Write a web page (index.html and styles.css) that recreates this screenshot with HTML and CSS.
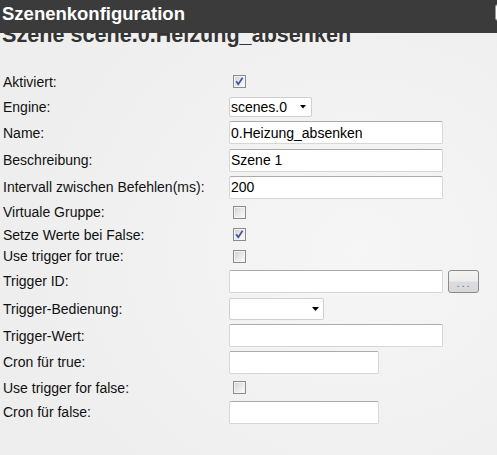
FILE: index.html
```html
<!DOCTYPE html>
<html lang="de">
<head>
<meta charset="utf-8">
<title>Szenenkonfiguration</title>
<link rel="stylesheet" href="styles.css">
</head>
<body>
<header class="topbar">
  <span class="topbar-title">Szenenkonfiguration</span>
  <span class="edge-btn"></span>
</header>
<main class="content">
  <h2 class="scene-title">Szene scene.0.Heizung_absenken</h2>
  <div class="form">
    <div class="row h25"><span class="lbl">Aktiviert:</span><span class="cb"><svg class="chk" width="11" height="11" viewBox="0 0 11 11"><path d="M2.2 5.2 L4.3 8.3 L8.6 1.8" fill="none" stroke="#3f51a0" stroke-width="1.6"/></svg></span></div>
    <div class="row h25"><span class="lbl">Engine:</span><div class="sel sel-engine"><span class="sel-text">scenes.0</span><svg class="arrow" width="6" height="4" viewBox="0 0 6 4"><polygon points="0,0 6,0 3,3.5" fill="#000"/></svg></div></div>
    <div class="row h27"><span class="lbl">Name:</span><input class="txt wide" type="text" value="0.Heizung_absenken"></div>
    <div class="row h28"><span class="lbl">Beschreibung:</span><input class="txt wide" type="text" value="Szene 1"></div>
    <div class="row h26"><span class="lbl">Intervall zwischen Befehlen(ms):</span><input class="txt wide" type="text" value="200"></div>
    <div class="row h24"><span class="lbl">Virtuale Gruppe:</span><span class="cb"></span></div>
    <div class="row h21"><span class="lbl">Setze Werte bei False:</span><span class="cb"><svg class="chk" width="11" height="11" viewBox="0 0 11 11"><path d="M2.2 5.2 L4.3 8.3 L8.6 1.8" fill="none" stroke="#3f51a0" stroke-width="1.6"/></svg></span></div>
    <div class="row h22"><span class="lbl">Use trigger for true:</span><span class="cb"></span></div>
    <div class="row h28"><span class="lbl">Trigger ID:</span><div class="ctl-group"><input class="txt wide" type="text" value=""><button class="dots-btn" type="button">...</button></div></div>
    <div class="row h27"><span class="lbl">Trigger-Bedienung:</span><div class="sel sel-trigger"><span class="sel-text"></span><svg class="arrow" width="7" height="4" viewBox="0 0 7 4"><polygon points="0,0 7,0 3.5,4" fill="#000"/></svg></div></div>
    <div class="row h27"><span class="lbl">Trigger-Wert:</span><input class="txt wide" type="text" value=""></div>
    <div class="row h26"><span class="lbl">Cron für true:</span><input class="txt short" type="text" value=""></div>
    <div class="row h25"><span class="lbl">Use trigger for false:</span><span class="cb"></span></div>
    <div class="row h24"><span class="lbl">Cron für false:</span><input class="txt short" type="text" value=""></div>
  </div>
</main>
</body>
</html>
```
FILE: styles.css
```css
html, body {
  margin: 0;
  height: 100%;
  overflow: hidden;
}
body {
  font-family: "Liberation Sans", Arial, sans-serif;
  color: #000;
  background: radial-gradient(ellipse 70% 70% at 72% 55%, #f6f6f6 0%, #f2f2f2 45%, #eeeeee 100%);
}
.topbar {
  height: 33px;
  background: #3b3b3b;
  display: flex;
  align-items: flex-start;
}
.topbar-title {
  color: #fff;
  font-weight: bold;
  font-size: 18.5px;
  line-height: 23px;
  margin-top: 2px;
  padding-left: 2px;
}
.edge-btn {
  margin-left: auto;
  margin-top: 4px;
  margin-right: -20px;
  width: 20px;
  height: 15px;
  flex-shrink: 0;
  background: #fff;
  border: 1px solid #9a9a9a;
  border-radius: 3px;
}
.content {
  overflow: hidden;
}
.scene-title {
  margin: -11px 0 0 0;
  padding-left: 2px;
  font-size: 21.6px;
  line-height: 25px;
  font-weight: bold;
  color: #333;
  white-space: nowrap;
}
.form {
  padding: 22px 0 0 3px;
}
.row {
  display: grid;
  grid-template-columns: 226px auto;
  align-items: center;
}
.h21 { height: 21px; }
.h22 { height: 22px; }
.h24 { height: 24px; }
.h25 { height: 25px; }
.h26 { height: 26px; }
.h27 { height: 27px; }
.h28 { height: 28px; }
.lbl {
  font-size: 14px;
  white-space: nowrap;
  color: #111;
}
.cb {
  display: block;
  width: 11px;
  height: 11px;
  margin-left: 4px;
  border: 1px solid #8c8c8c;
  background: linear-gradient(135deg, #cdcdcd 0%, #e6e6e6 45%, #f8f8f8 85%);
  box-shadow: inset 0 0 0 1px #f2f2f2;
}
.chk {
  display: block;
}
.sel {
  box-sizing: border-box;
  display: flex;
  align-items: center;
  background: #fff;
  border: 1px solid #cfcfcf;
  border-radius: 2px;
  font-size: 14px;
}
.sel-engine {
  width: 83px;
  height: 20px;
}
.sel-trigger {
  width: 95px;
  height: 22px;
}
.sel-text {
  padding-left: 1px;
}
.sel .arrow {
  display: block;
  margin-left: auto;
}
.sel-engine .arrow { margin-right: 5px; margin-top: 1px; }
.sel-trigger .arrow { margin-right: 4px; }
.txt {
  box-sizing: border-box;
  height: 23px;
  margin: 0;
  padding: 0 1px;
  font-family: "Liberation Sans", Arial, sans-serif;
  font-size: 14px;
  color: #000;
  background: #fff;
  border: 1px solid #d6d6d6;
  border-top-color: #ababab;
  border-radius: 2px;
  outline: none;
}
.wide { width: 214px; }
.short { width: 150px; }
.ctl-group {
  display: flex;
  align-items: center;
}
.dots-btn {
  box-sizing: border-box;
  width: 31px;
  height: 23px;
  margin: 0 0 0 5px;
  padding: 0 0 6px 1px;
  display: flex;
  align-items: flex-end;
  justify-content: center;
  border: 1px solid #8a8a8a;
  border-radius: 3px;
  background: linear-gradient(to bottom, #f3f3f3 0%, #ececec 48%, #dcdcdc 52%, #d8d8d8 100%);
  color: #3a74c0;
  font-family: "Liberation Sans", Arial, sans-serif;
  font-size: 11px;
  font-weight: normal;
  line-height: 6px;
  letter-spacing: 2px;
}
```
